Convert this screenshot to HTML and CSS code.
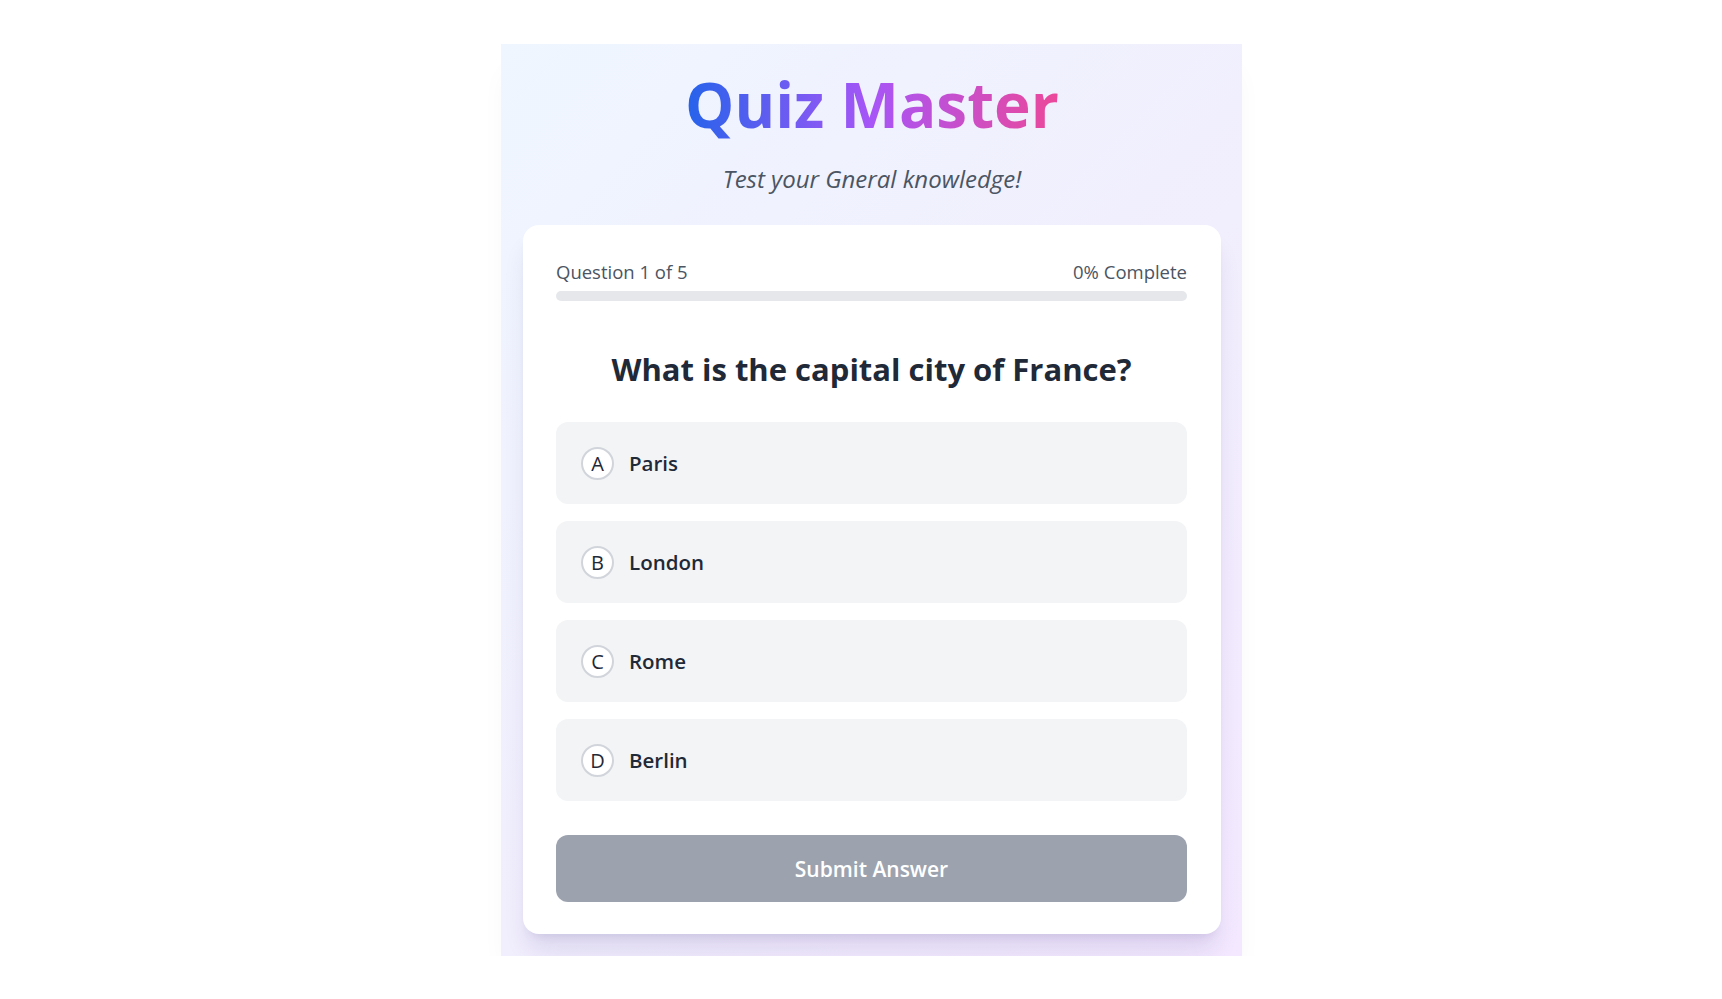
FILE: index.html
```html
<!DOCTYPE html>
<html lang="en">
<head>
<meta charset="utf-8">
<title>Quiz Master</title>
<link rel="stylesheet" href="styles.css">
</head>
<body>
<div class="page">
  <main class="quiz">
    <header class="quiz-head">
      <h1 class="title">Quiz Master</h1>
      <p class="subtitle">Test your Gneral knowledge!</p>
    </header>
    <section class="card">
      <div class="progress-meta">
        <span>Question 1 of 5</span>
        <span>0% Complete</span>
      </div>
      <div class="progress-track"><div class="progress-fill" style="width:0%"></div></div>
      <h2 class="question">What is the capital city of France?</h2>
      <div class="options">
        <button class="option"><span class="letter">A</span><span class="label">Paris</span></button>
        <button class="option"><span class="letter">B</span><span class="label">London</span></button>
        <button class="option"><span class="letter">C</span><span class="label">Rome</span></button>
        <button class="option"><span class="letter">D</span><span class="label">Berlin</span></button>
      </div>
      <button class="submit" disabled>Submit Answer</button>
    </section>
  </main>
</div>
</body>
</html>
```

FILE: styles.css
```css
* { box-sizing: border-box; }
html, body { margin: 0; padding: 0; background: #ffffff; }
body { font-family: "Open Sans", "Noto Sans", sans-serif; color: #1f2937; }

.page { padding: 44px 0 0 501px; }

.quiz {
  width: 741px;
  padding: 20px 21px 22px 22px;
  background: linear-gradient(135deg, #eff6ff 0%, #f1eefd 55%, #f3e8ff 100%);
  box-shadow: 0 20px 30px -10px rgba(0,0,0,0.06);
}

.quiz-head { text-align: center; }

.title {
  margin: 0;
  font-size: 62px;
  line-height: 80px;
  font-weight: 700;
  background: linear-gradient(90deg, #2563eb 0%, #a855f7 50%, #ec4899 100%);
  -webkit-background-clip: text;
  background-clip: text;
  color: transparent;
  display: inline-block;
}

.subtitle {
  margin: 20px 0 0;
  font-size: 24px;
  line-height: 30px;
  font-style: italic;
  color: #4b5563;
}

.card {
  margin-top: 31px;
  background: #ffffff;
  border-radius: 16px;
  padding: 33px 34px 32px 33px;
  box-shadow: 0 20px 25px -5px rgba(60,40,120,0.12), 0 8px 10px -6px rgba(60,40,120,0.10);
}

.progress-meta {
  display: flex;
  justify-content: space-between;
  font-size: 18.5px;
  line-height: 28px;
  color: #4b5563;
}

.progress-track {
  margin-top: 5px;
  height: 10px;
  border-radius: 999px;
  background: #e5e7eb;
  overflow: hidden;
}
.progress-fill { height: 100%; background: linear-gradient(90deg, #2563eb, #a855f7); }

.question {
  margin: 46px 0 0;
  text-align: center;
  font-size: 31px;
  line-height: 44px;
  font-weight: 700;
  color: #1f2937;
}

.options {
  margin-top: 31px;
  display: flex;
  flex-direction: column;
  gap: 17px;
}

.option {
  display: flex;
  align-items: center;
  gap: 15px;
  height: 82px;
  padding: 0 25px;
  border: none;
  border-radius: 12px;
  background: #f3f4f6;
  font-family: inherit;
  text-align: left;
  cursor: pointer;
}

.letter {
  width: 33px;
  height: 33px;
  border-radius: 50%;
  border: 2px solid #d1d5db;
  background: #ffffff;
  display: flex;
  align-items: center;
  justify-content: center;
  font-size: 20px;
  color: #1f2937;
  font-weight: 400;
}

.label {
  font-size: 20.5px;
  font-weight: 600;
  color: #1f2937;
}

.submit {
  margin-top: 34px;
  width: 100%;
  height: 67px;
  border: none;
  border-radius: 12px;
  background: #9ca3af;
  color: #ffffff;
  font-family: inherit;
  font-size: 21px;
  font-weight: 600;
}
```
